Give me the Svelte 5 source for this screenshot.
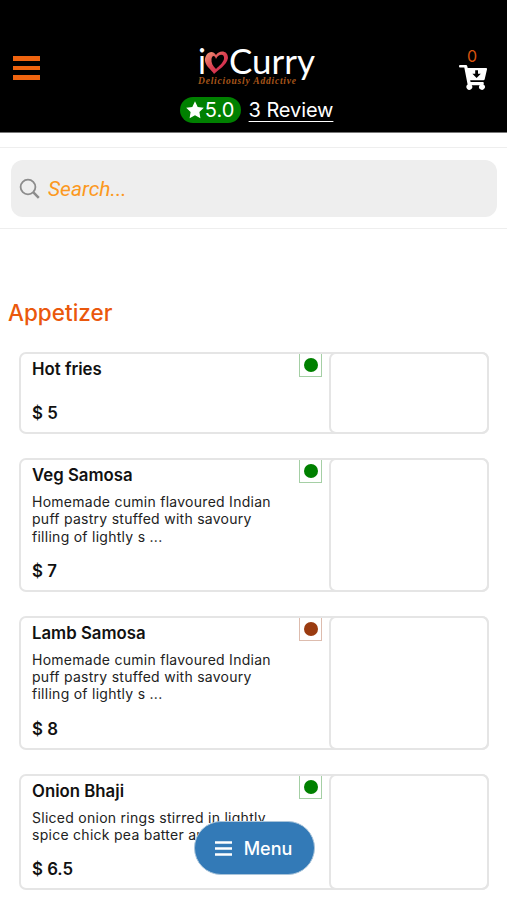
<script>
	let search = $state('');
	let cartCount = $state(0);

	const rating = '5.0';
	const reviews = 3;

	const categories = [
		{
			name: 'Appetizer',
			items: [
				{ name: 'Hot fries', lines: [], price: 5, veg: true },
				{
					name: 'Veg Samosa',
					lines: ['Homemade cumin flavoured Indian', 'puff pastry stuffed with savoury', 'filling of lightly s ...'],
					price: 7,
					veg: true
				},
				{
					name: 'Lamb Samosa',
					lines: ['Homemade cumin flavoured Indian', 'puff pastry stuffed with savoury', 'filling of lightly s ...'],
					price: 8,
					veg: false
				},
				{
					name: 'Onion Bhaji',
					lines: ['Sliced onion rings stirred in lightly', 'spice chick pea batter and'],
					price: 6.5,
					veg: true
				}
			]
		}
	];

	function filterItems(items) {
		const q = search.trim().toLowerCase();
		return q ? items.filter((i) => i.name.toLowerCase().includes(q)) : items;
	}
</script>

<div class="page">
	<header>
		<button class="burger" aria-label="Open navigation">
			<span></span>
			<span></span>
			<span></span>
		</button>

		<div class="brand">
			<svg class="logo" width="122" height="50" viewBox="0 -4 122 50" role="img" aria-label="i love Curry">
				<defs>
					<linearGradient id="heart" x1="0" y1="0" x2="1" y2="1">
						<stop offset="0" stop-color="#f09a78" />
						<stop offset="0.5" stop-color="#dc4050" />
						<stop offset="1" stop-color="#c82050" />
					</linearGradient>
				</defs>
				<text class="logo-name" x="2" y="31" textLength="8" lengthAdjust="spacingAndGlyphs">i</text>
				<path
					fill="url(#heart)"
					fill-rule="evenodd"
					d="M20 12C16 5 8 11 9 18C10 24 16 27 18 31C22 27 31 22 32 15C32 7 23 7 20 12ZM20 16C23 10 29 11 28 16C27 20 23 23 20 26C17 23 15 20 15.500 16C16 12 19 12 20 16Z"
				/>
				<text class="logo-name" x="33" y="31" textLength="86" lengthAdjust="spacingAndGlyphs">Curry</text>
				<text class="logo-tag" x="2" y="41" textLength="98">Deliciously Addictive</text>
			</svg>
			<div class="rating">
				<span class="score">
					<svg width="18" height="18" viewBox="0 0 18 18">
						<path fill="#fff" d="M9 .3l2.700 5.600 6.100.8-4.400 4.300 1 6.200L9 14.300l-5.400 2.900 1-6.200L.2 6.700l6.100-.8z" />
					</svg>{rating}
				</span>
				<a href="#reviews">{reviews} Review</a>
			</div>
		</div>

		<button class="cart" aria-label="Cart">
			<span>{cartCount}</span>
			<svg width="29" height="27" viewBox="0 0 29 27">
				<path
					fill="#fff"
					fill-rule="evenodd"
					d="M1 1h6q1 0 1.300 1.200L8.700 4H27q1.300 0 1 1.300l-2.300 10q-.3 1-1.300 1H11.200l.4 1.700h12.200q1.200 0 1 1.200l-.3 1.300a2.900 2.900 0 1 1-3.800.7h-8a2.900 2.900 0 1 1-4.100-.6L5.300 3.600H1Q0 3.600 0 2.300 0 1 1 1zM16.200 6.300v3.400h-2.800l4.200 4.200 4.200-4.200H19V6.300z"
				/>
			</svg>
		</button>
	</header>

	<div class="search-wrap">
		<label class="search">
			<svg width="22" height="22" viewBox="0 0 22 22" fill="none" stroke="#8c8c8c">
				<circle cx="9" cy="9" r="7.4" stroke-width="1.8" />
				<path d="M14.4 14.4l5.4 5.4" stroke-width="2.5" />
			</svg>
			<input type="text" placeholder="Search..." bind:value={search} />
		</label>
	</div>

	<main>
		{#each categories as category (category.name)}
			<h2>{category.name}</h2>
			<div class="items">
				{#each filterItems(category.items) as item (item.name)}
					<article class="item">
						<div class="info">
							<h3>{item.name}</h3>
							<p>
								{#each item.lines as line}
									<span>{line}</span>
								{/each}
							</p>
							<div class="price">$ {item.price}</div>
						</div>
						<div class="mark" class:meat={!item.veg}><i></i></div>
						<div class="photo"></div>
					</article>
				{/each}
			</div>
		{/each}
	</main>

	<!-- floating category menu -->
	<button class="menu">
		<svg width="17" height="15" viewBox="0 0 17 15" stroke="#fff" stroke-width="2.6">
			<path d="M0 1.5h17M0 7.5h17M0 13.5h17" />
		</svg>
		Menu
	</button>
</div>

<style>
	:global(body) {
		margin: 0;
		background: #fff;
	}

	.page {
		height: 900px;
		overflow: hidden;
		font-family: Inter, 'Liberation Sans', sans-serif;
		color: #111;
	}

	button {
		border: 0;
		padding: 0;
		background: none;
		font-family: inherit;
	}

	header {
		display: flex;
		justify-content: space-between;
		align-items: flex-start;
		height: 133px;
		padding: 0 19px 0 13px;
		box-sizing: border-box;
		background: #000;
		border-bottom: 1px solid #777;
	}

	.burger {
		display: flex;
		flex-direction: column;
		gap: 5px;
		width: 27px;
		margin-top: 56px;
	}

	.burger span {
		height: 4.5px;
		background: #f0640f;
	}

	.brand {
		display: flex;
		flex-direction: column;
		align-items: center;
		padding: 39px 0 0 14px;
	}

	.logo {
		display: block;
		overflow: visible;
	}

	.logo-name {
		font-family: Lato, sans-serif;
		font-size: 35px;
		fill: #fff;
	}

	.logo-tag {
		font-family: 'Liberation Serif', serif;
		font-style: italic;
		font-weight: 700;
		font-size: 9.5px;
		fill: #a8561a;
	}

	.rating {
		display: flex;
		align-items: center;
		gap: 8px;
		margin-top: 8px;
		font-size: 20px;
		line-height: 26px;
	}

	.score {
		display: flex;
		align-items: center;
		justify-content: center;
		gap: 1px;
		width: 61px;
		height: 26px;
		border-radius: 13px;
		background: #008000;
		color: #fff;
	}

	.rating a {
		color: #fff;
		text-decoration: underline;
		text-decoration-thickness: 1px;
		text-underline-offset: 4px;
		white-space: nowrap;
		letter-spacing: -0.1px;
	}

	.cart {
		display: flex;
		flex-direction: column;
		align-items: center;
		margin-top: 49px;
		color: #d9540f;
		font-size: 16px;
		line-height: 15px;
	}

	.cart span {
		margin-right: 3px;
	}

	.search-wrap {
		margin-top: 14px;
		padding: 12px 10px 11px 11px;
		border-top: 1px solid #eee;
		border-bottom: 1px solid #eee;
	}

	.search {
		display: flex;
		align-items: center;
		gap: 7px;
		height: 57px;
		padding: 0 8px;
		border-radius: 12px;
		background: #eee;
	}

	.search input {
		flex: 1;
		min-width: 0;
		padding: 0;
		border: 0;
		outline: none;
		background: none;
		font-family: Roboto, sans-serif;
		font-size: 21px;
		font-style: italic;
		color: #333;
	}

	.search input::placeholder {
		color: #fc9820;
		opacity: 1;
	}

	h2 {
		margin: 70px 8px 25px;
		font-size: 22.5px;
		line-height: 28px;
		font-weight: 500;
		color: #ea580c;
	}

	.items {
		display: flex;
		flex-direction: column;
		gap: 24px;
		padding: 0 18px 0 19px;
	}

	.item {
		display: flex;
		box-sizing: border-box;
		border: 2px solid #e5e5e5;
		border-radius: 7px;
	}

	.info {
		display: flex;
		flex-direction: column;
		flex: 1;
		padding: 3px 0 7px 11px;
	}

	h3,
	.price {
		margin: 0;
		font-size: 16.8px;
		line-height: 24px;
		font-weight: 600;
	}

	p {
		margin: 6px 0 14px;
		font-size: 14px;
		line-height: 17.3px;
		letter-spacing: 0.27px;
		color: #222;
	}

	p span {
		display: block;
		white-space: nowrap;
	}

	.mark {
		display: flex;
		align-items: center;
		justify-content: center;
		width: 21px;
		height: 22px;
		margin-right: 9px;
		border: 1px solid #a5cfa5;
		border-top: 0;
	}

	.mark i {
		width: 14px;
		height: 14px;
		border-radius: 50%;
		background: #008000;
	}

	.mark.meat {
		border-color: #ddbcae;
	}

	.mark.meat i {
		background: #9a3b10;
	}

	.photo {
		width: 156px;
		margin: -2px;
		border: 2px solid #e5e5e5;
		border-radius: 7px;
	}

	.menu {
		position: fixed;
		left: 194px;
		top: 821px;
		display: flex;
		align-items: center;
		justify-content: center;
		gap: 12px;
		width: 121px;
		height: 54px;
		padding-right: 2px;
		box-sizing: border-box;
		border: 1px solid #a9c4da;
		border-radius: 27px;
		background: #337ab7;
		color: #fff;
		font-size: 18px;
		font-weight: 500;
	}
</style>
